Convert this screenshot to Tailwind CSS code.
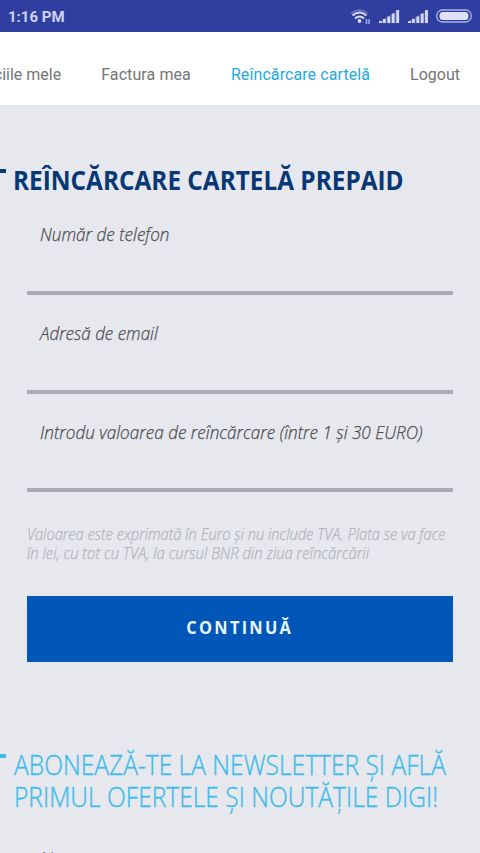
<!DOCTYPE html>
<html lang="ro">
<head>
<meta charset="utf-8">
<meta name="viewport" content="width=device-width, initial-scale=1">
<title>Reîncărcare cartelă</title>
<script src="https://cdn.jsdelivr.net/npm/@tailwindcss/browser@4"></script>
</head>
<body class="h-[853px] w-[480px] overflow-hidden bg-[#e6e8ed] font-['Open_Sans','Noto_Sans',sans-serif]">
<header class="flex h-8 items-center justify-between bg-[#303f9f] pl-2 pr-2 font-[Roboto,sans-serif]">
  <span class="pt-0.5 text-[15px] font-bold text-[#cdd3f4]">1:16 PM</span>
  <svg class="h-8 w-[130px]" viewBox="342 0 130 32" fill="none">
    <g stroke="#d5daf6" stroke-width="2">
      <path d="M351 13.5Q359.5 6.500 368 13.500" opacity=".4" stroke-width="1.5"/>
      <path d="M352.500 15.500Q359.500 9.500 366.500 15.500"/>
      <path d="M355 18.500Q359.500 14.500 364 18.500"/>
    </g>
    <circle cx="359.500" cy="21" r="1.900" fill="#d5daf6"/>
    <path d="M366.500 19v5M369 19v5" stroke="#9fa9df" stroke-width="1.500"/>
    <path d="M379 23.200V21.600L399.200 9.500v13.700z" fill="#d5daf6" opacity=".2"/>
    <path d="M380.500 21v2M384.300 19v4M388.800 16.500v6.500M393.200 13.500v9.500M397.700 10v13" stroke="#d5daf6" stroke-width="2.800"/>
    <path d="M408 23.200V21.600L428 9.500v13.700z" fill="#d5daf6" opacity=".2"/>
    <path d="M409.500 21v2M413.300 19v4M417.800 16.500v6.500M422.200 13.500v9.500M426.500 10v13" stroke="#d5daf6" stroke-width="2.800"/>
    <rect x="436.800" y="10" width="34.400" height="12" rx="5.500" stroke="#aab3e6" stroke-width="1.300"/>
    <rect x="439.500" y="12" width="29" height="8" rx="3.500" fill="#dfe3fa"/>
  </svg>
</header>
<nav class="flex h-[73px] items-center justify-end gap-10 whitespace-nowrap bg-white pr-5 pt-3 font-[Roboto,sans-serif] text-base text-[#757575]">
  <a>Serviciile mele</a><a class="tracking-[0.09px]">Factura mea</a><a class="tracking-[0.09px] text-[#1eaae4]">Reîncărcare cartelă</a><a>Logout</a>
</nav>
<main class="whitespace-nowrap">
  <h1 class="flex pt-[56px] text-[27px] leading-[38px] font-bold text-[#073775]">
    <span class="mt-[8px] mr-[7px] h-1 w-1.5 shrink-0 bg-[#073775]"></span><span class="origin-left scale-x-[0.902]">REÎNCĂRCARE CARTELĂ PREPAID</span>
  </h1>
  <form class="mx-[27px] text-[18.500px] font-light italic text-[#4c4d52]">
    <label class="mt-[17px] block h-[79px] border-b-4 border-[#a9acb3] pl-[13px] leading-9"><span class="inline-block origin-left scale-x-[0.925] [-webkit-text-stroke:0.25px]">Număr de telefon</span></label>
    <label class="mt-[19.700px] block h-[79px] border-b-4 border-[#a9acb3] pl-[13px] leading-9"><span class="inline-block origin-left scale-x-[0.92] [-webkit-text-stroke:0.25px]">Adresă de email</span></label>
    <label class="mt-[20.700px] block h-[78px] border-b-4 border-[#a9acb3] pl-[13px] leading-9"><span class="inline-block origin-left scale-x-[0.925] [-webkit-text-stroke:0.25px]">Introdu valoarea de reîncărcare (între 1 și 30 EURO)</span></label>
    <p class="mt-[33px] text-[16px] leading-[18.500px] text-[#b2b4ba] [-webkit-text-stroke:0.25px]"><span class="block origin-left scale-x-[0.916]">Valoarea este exprimată în Euro și nu include TVA. Plata se va face</span><span class="block origin-left scale-x-[0.925]">în lei, cu tot cu TVA, la cursul BNR din ziua reîncărcării</span></p>
    <button type="button" class="mt-[34px] block h-[66px] w-full bg-[#0057b8] pb-[3px] text-[18px] font-bold not-italic tracking-[2.500px] text-[#e8f4ff]"><span class="inline-block scale-x-[0.91]">CONTINUĂ</span></button>
  </form>
  <h2 class="flex pt-[87px] text-[27px] leading-8 font-light text-[#3fbbeb]">
    <span class="mt-[5px] mr-[8px] h-1 w-1.5 shrink-0 bg-[#3fbbeb]"></span>
    <span class="shrink-0 origin-left scale-x-[0.91] [-webkit-text-stroke:0.35px]">ABONEAZĂ-TE LA NEWSLETTER ȘI AFLĂ<br>PRIMUL OFERTELE ȘI NOUTĂȚILE DIGI!</span>
  </h2>
  <p class="mt-[27px] pl-[40px] text-[18.500px] leading-9 font-light italic text-[#4c4d52]">Nume</p>
</main>
</body>
</html>
